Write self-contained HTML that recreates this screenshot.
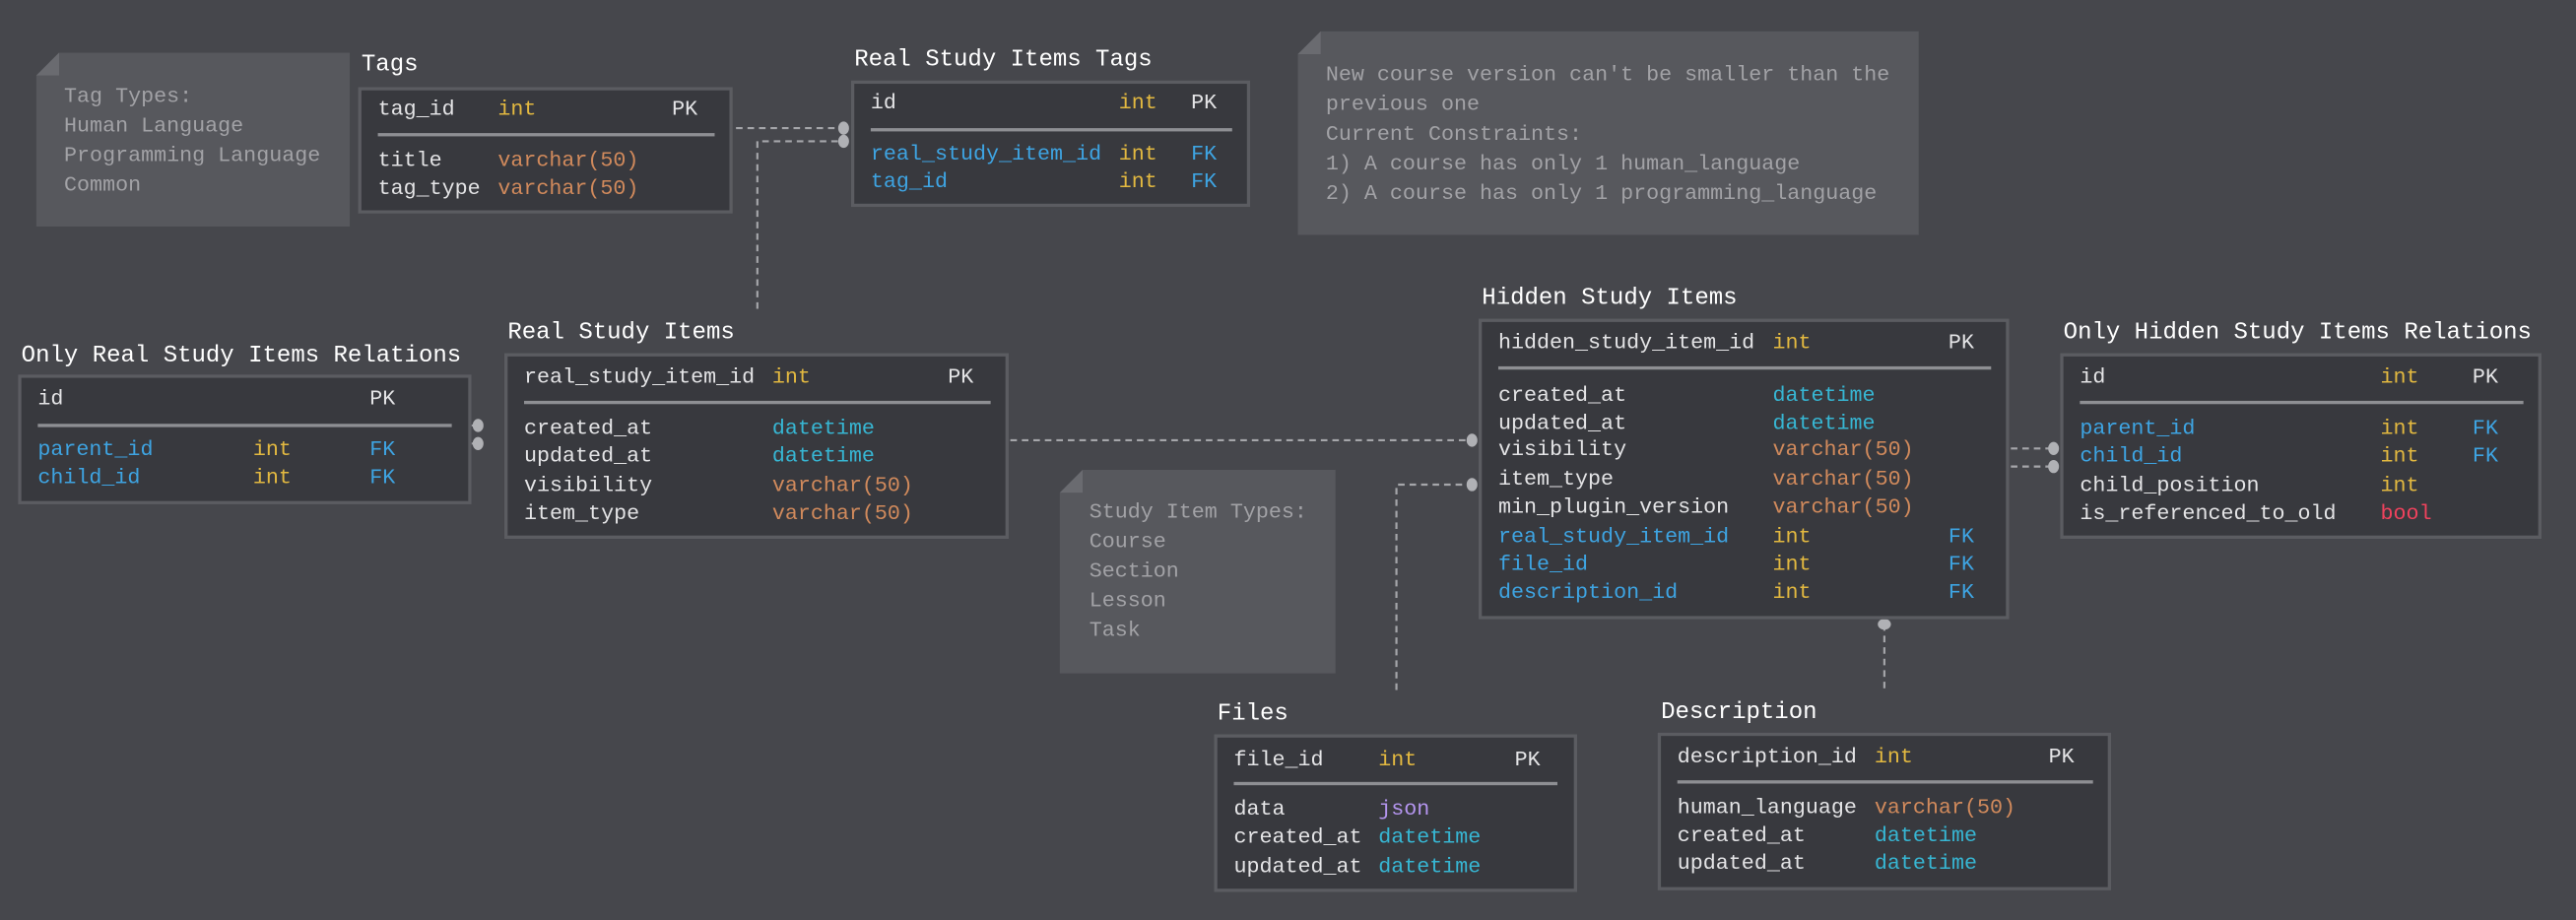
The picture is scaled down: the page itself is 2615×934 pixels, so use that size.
<!DOCTYPE html>
<html><head><meta charset="utf-8"><style>
html,body{margin:0;padding:0;background:#46474c;width:2615px;height:933px;overflow:hidden}
#c{position:absolute;left:0;top:0;width:1568px;height:560px;transform:scale(1.66773);transform-origin:0 0;font-family:"Liberation Mono",monospace;font-size:13px}
.b{position:absolute;background:#38393e;border:2px solid #5b5c61;box-sizing:border-box}
.n{position:absolute;background:#57585d;clip-path:polygon(14px 0,100% 0,100% 100%,0 100%,0 14px)}
.f{position:absolute;width:14px;height:14px;background:#6a6b70;clip-path:polygon(14px 0,14px 14px,0 14px)}
.t{position:absolute;line-height:16px;white-space:pre;color:#e4e4e6;margin-top:1px}
.h{position:absolute;line-height:18px;white-space:pre;color:#fff;font-size:14.4px;margin-top:1px}
.g{color:#a2a2a6;line-height:18px}
.d{position:absolute;height:2px;background:#8e8f93}
.y{color:#e3b940}.o{color:#d18a5c}.c{color:#37b6d3}.u{color:#3ea4e2}.p{color:#b495ef}.r{color:#f0425d}
</style></head><body><div id="c">
<svg width="1568" height="560" style="position:absolute;left:0;top:0" fill="none" stroke="#a5a6aa" stroke-width="1.3" stroke-dasharray="4,3">
<path d="M448 78H513M461 188V86H513M287 259H291M287 270H291M615 268H896M850 420V295H896M1224 273H1250M1224 284H1250M1147 380V420"/>
<g fill="#b0b1b5" stroke="none"><ellipse cx="513.5" cy="78" rx="3.3" ry="4"/><ellipse cx="513.5" cy="86" rx="3.3" ry="4"/><ellipse cx="291" cy="259" rx="3.3" ry="4"/><ellipse cx="291" cy="270" rx="3.3" ry="4"/><ellipse cx="896" cy="268" rx="3.3" ry="4"/><ellipse cx="896" cy="295" rx="3.3" ry="4"/><ellipse cx="1250" cy="273" rx="3.3" ry="4"/><ellipse cx="1250" cy="284" rx="3.3" ry="4"/><ellipse cx="1147" cy="380" rx="4" ry="3.3"/></g>
</svg>

<div class="n" style="left:22px;top:32px;width:191px;height:106px"></div><div class="f" style="left:22px;top:32px"></div>
<div class="t g" style="left:39px;top:49px">Tag Types:
Human Language
Programming Language
Common</div>

<div class="n" style="left:790px;top:19px;width:378px;height:124px"></div><div class="f" style="left:790px;top:19px"></div>
<div class="t g" style="left:807px;top:36px">New course version can't be smaller than the
previous one
Current Constraints:
1) A course has only 1 human_language
2) A course has only 1 programming_language</div>

<div class="n" style="left:645px;top:286px;width:168px;height:124px"></div><div class="f" style="left:645px;top:286px"></div>
<div class="t g" style="left:663px;top:302px">Study Item Types:
Course
Section
Lesson
Task</div>

<div class="h" style="left:220px;top:30px">Tags</div>
<div class="b" style="left:218px;top:53px;width:228px;height:77px"></div>
<div class="d" style="left:230px;top:81px;width:205px"></div>
<div class="t" style="left:230px;top:58px">tag_id</div><div class="t y" style="left:303px;top:58px">int</div><div class="t" style="left:409px;top:58px">PK</div>
<div class="t" style="left:230px;top:89px">title</div><div class="t o" style="left:303px;top:89px">varchar(50)</div>
<div class="t" style="left:230px;top:106px">tag_type</div><div class="t o" style="left:303px;top:106px">varchar(50)</div>

<div class="h" style="left:520px;top:27px">Real Study Items Tags</div>
<div class="b" style="left:518px;top:49px;width:243px;height:77px"></div>
<div class="d" style="left:530px;top:78px;width:220px"></div>
<div class="t" style="left:530px;top:54px">id</div><div class="t y" style="left:681px;top:54px">int</div><div class="t" style="left:725px;top:54px">PK</div>
<div class="t u" style="left:530px;top:85px">real_study_item_id</div><div class="t y" style="left:681px;top:85px">int</div><div class="t u" style="left:725px;top:85px">FK</div>
<div class="t u" style="left:530px;top:102px">tag_id</div><div class="t y" style="left:681px;top:102px">int</div><div class="t u" style="left:725px;top:102px">FK</div>

<div class="h" style="left:13px;top:207px">Only Real Study Items Relations</div>
<div class="b" style="left:11px;top:228px;width:276px;height:79px"></div>
<div class="d" style="left:23px;top:258px;width:252px"></div>
<div class="t" style="left:23px;top:234px">id</div><div class="t" style="left:225px;top:234px">PK</div>
<div class="t u" style="left:23px;top:265px">parent_id</div><div class="t y" style="left:154px;top:265px">int</div><div class="t u" style="left:225px;top:265px">FK</div>
<div class="t u" style="left:23px;top:282px">child_id</div><div class="t y" style="left:154px;top:282px">int</div><div class="t u" style="left:225px;top:282px">FK</div>

<div class="h" style="left:309px;top:193px">Real Study Items</div>
<div class="b" style="left:307px;top:215px;width:307px;height:113px"></div>
<div class="d" style="left:319px;top:244px;width:284px"></div>
<div class="t" style="left:319px;top:221px">real_study_item_id</div><div class="t y" style="left:470px;top:221px">int</div><div class="t" style="left:577px;top:221px">PK</div>
<div class="t" style="left:319px;top:252px">created_at</div><div class="t c" style="left:470px;top:252px">datetime</div>
<div class="t" style="left:319px;top:269px">updated_at</div><div class="t c" style="left:470px;top:269px">datetime</div>
<div class="t" style="left:319px;top:287px">visibility</div><div class="t o" style="left:470px;top:287px">varchar(50)</div>
<div class="t" style="left:319px;top:304px">item_type</div><div class="t o" style="left:470px;top:304px">varchar(50)</div>

<div class="h" style="left:902px;top:172px">Hidden Study Items</div>
<div class="b" style="left:900px;top:194px;width:323px;height:183px"></div>
<div class="d" style="left:912px;top:223px;width:300px"></div>
<div class="t" style="left:912px;top:200px">hidden_study_item_id</div><div class="t y" style="left:1079px;top:200px">int</div><div class="t" style="left:1186px;top:200px">PK</div>
<div class="t" style="left:912px;top:232px">created_at</div><div class="t c" style="left:1079px;top:232px">datetime</div>
<div class="t" style="left:912px;top:249px">updated_at</div><div class="t c" style="left:1079px;top:249px">datetime</div>
<div class="t" style="left:912px;top:265px">visibility</div><div class="t o" style="left:1079px;top:265px">varchar(50)</div>
<div class="t" style="left:912px;top:283px">item_type</div><div class="t o" style="left:1079px;top:283px">varchar(50)</div>
<div class="t" style="left:912px;top:300px">min_plugin_version</div><div class="t o" style="left:1079px;top:300px">varchar(50)</div>
<div class="t u" style="left:912px;top:318px">real_study_item_id</div><div class="t y" style="left:1079px;top:318px">int</div><div class="t u" style="left:1186px;top:318px">FK</div>
<div class="t u" style="left:912px;top:335px">file_id</div><div class="t y" style="left:1079px;top:335px">int</div><div class="t u" style="left:1186px;top:335px">FK</div>
<div class="t u" style="left:912px;top:352px">description_id</div><div class="t y" style="left:1079px;top:352px">int</div><div class="t u" style="left:1186px;top:352px">FK</div>

<div class="h" style="left:1256px;top:193px">Only Hidden Study Items Relations</div>
<div class="b" style="left:1254px;top:215px;width:293px;height:113px"></div>
<div class="d" style="left:1266px;top:244px;width:270px"></div>
<div class="t" style="left:1266px;top:221px">id</div><div class="t y" style="left:1449px;top:221px">int</div><div class="t" style="left:1505px;top:221px">PK</div>
<div class="t u" style="left:1266px;top:252px">parent_id</div><div class="t y" style="left:1449px;top:252px">int</div><div class="t u" style="left:1505px;top:252px">FK</div>
<div class="t u" style="left:1266px;top:269px">child_id</div><div class="t y" style="left:1449px;top:269px">int</div><div class="t u" style="left:1505px;top:269px">FK</div>
<div class="t" style="left:1266px;top:287px">child_position</div><div class="t y" style="left:1449px;top:287px">int</div>
<div class="t" style="left:1266px;top:304px">is_referenced_to_old</div><div class="t r" style="left:1449px;top:304px">bool</div>

<div class="h" style="left:741px;top:425px">Files</div>
<div class="b" style="left:739px;top:447px;width:221px;height:96px"></div>
<div class="d" style="left:751px;top:476px;width:197px"></div>
<div class="t" style="left:751px;top:454px">file_id</div><div class="t y" style="left:839px;top:454px">int</div><div class="t" style="left:922px;top:454px">PK</div>
<div class="t" style="left:751px;top:484px">data</div><div class="t p" style="left:839px;top:484px">json</div>
<div class="t" style="left:751px;top:501px">created_at</div><div class="t c" style="left:839px;top:501px">datetime</div>
<div class="t" style="left:751px;top:519px">updated_at</div><div class="t c" style="left:839px;top:519px">datetime</div>

<div class="h" style="left:1011px;top:424px">Description</div>
<div class="b" style="left:1009px;top:446px;width:276px;height:96px"></div>
<div class="d" style="left:1021px;top:475px;width:253px"></div>
<div class="t" style="left:1021px;top:452px">description_id</div><div class="t y" style="left:1141px;top:452px">int</div><div class="t" style="left:1247px;top:452px">PK</div>
<div class="t" style="left:1021px;top:483px">human_language</div><div class="t o" style="left:1141px;top:483px">varchar(50)</div>
<div class="t" style="left:1021px;top:500px">created_at</div><div class="t c" style="left:1141px;top:500px">datetime</div>
<div class="t" style="left:1021px;top:517px">updated_at</div><div class="t c" style="left:1141px;top:517px">datetime</div>
</div></body></html>
